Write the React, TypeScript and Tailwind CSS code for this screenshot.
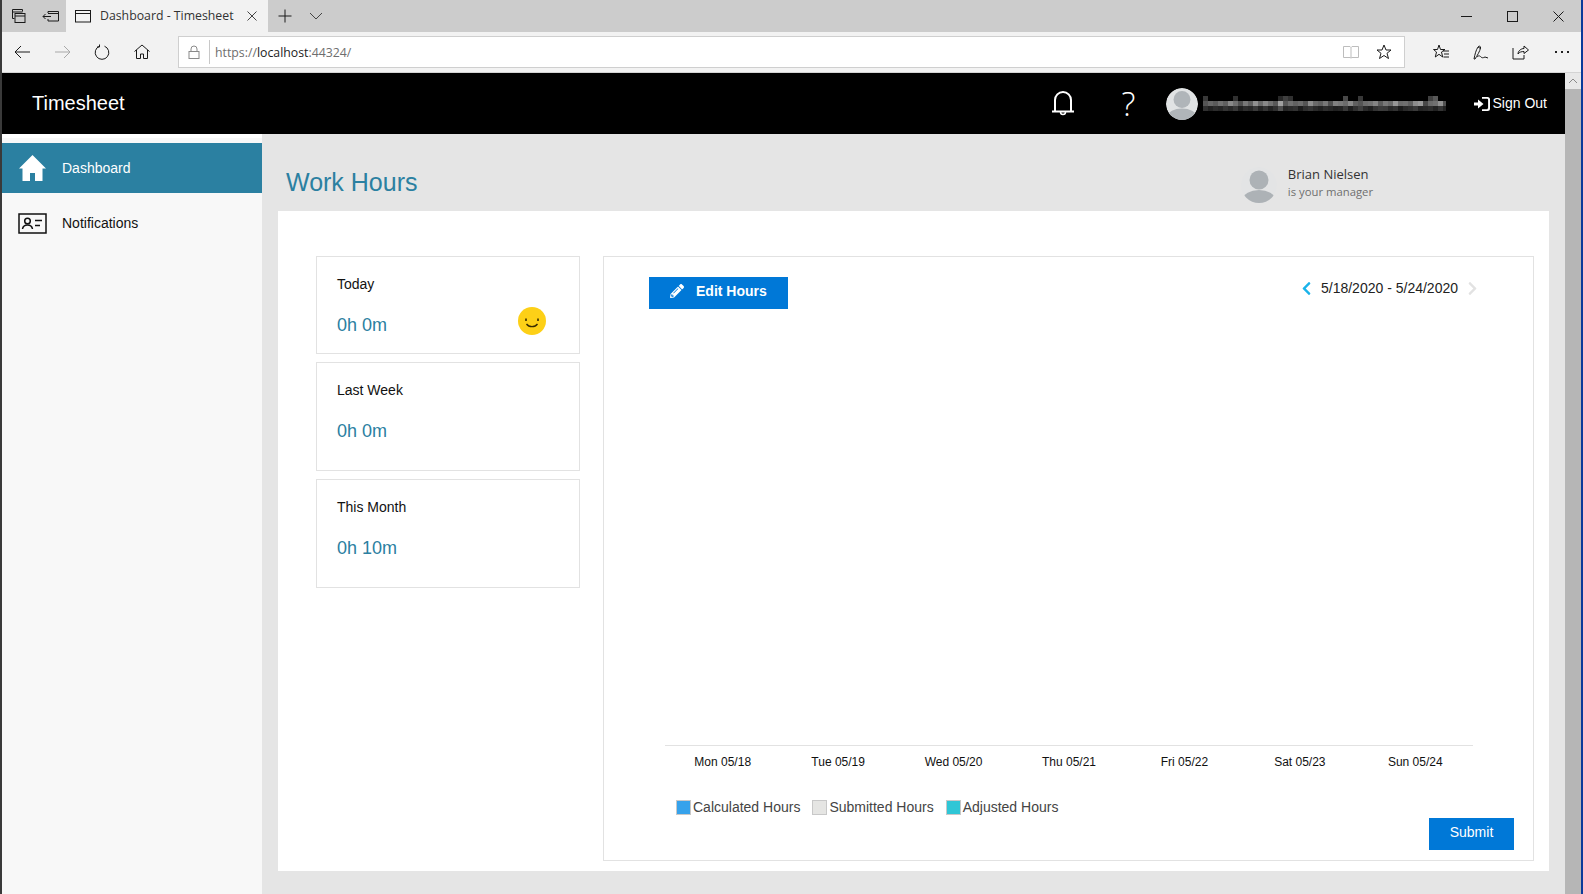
import React from "react";
import { FaPencilAlt, FaChevronLeft, FaChevronRight } from "react-icons/fa";

const mid = [0x55,0x66,0x5a,0x70,0x60,0x88,0x70,0x50,0x78,0x60,0x90,0x6a,0x88,0x70,0x58,0xa0,0x58,0x70,0x62,0x6c,0x55,0x8c,0x6a,0x60,0x78,0x50,0x80,0x78,0x6c,0x88,0x60,0x55,0x6c,0x72,0x84,0x5c,0x78,0x6a,0x96,0x6c,0x70,0x60,0x8c,0x98,0x48,0x6a,0x70,0x90,0x50];
const low = [0x30,0x22,0x2c,0x26,0x34,0x2a,0x38,0x20,0x2e,0x28,0x3a,0x24,0x34,0x22,0x30,0x50,0x26,0x2c,0x32,0x1c,0x2e,0x36,0x2a,0x22,0x2e,0x28,0x20,0x24,0x38,0x1e,0x30,0x40,0x2a,0x20,0x34,0x3c,0x3a,0x2a,0x32,0x1c,0x2a,0x30,0x3a,0x24,0x28,0x2e,0x22,0x34,0x22];
const top: [number, number][] = [[0,0x38],[6,0x30],[15,0x28],[16,0x40],[17,0x30],[28,0x48],[31,0x38],[45,0x40],[46,0x58]];

function Mosaic() {
  const g = (v: number) => `rgb(${v},${v},${v})`;
  return (
    <svg width="243" height="15" className="block">
      {top.map(([i, v]) => <rect key={"t" + i} x={i * 5} y={0} width={5} height={5} fill={g(v)} />)}
      {mid.map((v, i) => <rect key={"m" + i} x={i * 5} y={5} width={5} height={5} fill={g(v)} />)}
      {low.map((v, i) => <rect key={"l" + i} x={i * 5} y={10} width={5} height={5} fill={g(v)} />)}
    </svg>
  );
}

function Person({ size, bg, fg }: { size: number; bg: string; fg: string }) {
  return (
    <svg width={size} height={size} viewBox="0 0 36 36" className="block shrink-0">
      <defs>
        <clipPath id={"c" + size}><circle cx="18" cy="18" r="18" /></clipPath>
      </defs>
      <g clipPath={`url(#c${size})`}>
        <circle cx="18" cy="18" r="18" fill={bg} />
        <circle cx="18" cy="13" r="9.5" fill={fg} />
        <ellipse cx="18" cy="32" rx="16" ry="9" fill={fg} />
      </g>
    </svg>
  );
}

type IconProps = { children: React.ReactNode; w?: number; h?: number; c?: string };
function I({ children, w = 18, h = 18, c = "#1a1a1a" }: IconProps) {
  return (
    <svg width={w} height={h} viewBox={`0 0 ${w} ${h}`} fill="none" stroke={c} strokeWidth="1" className="block shrink-0">
      {children}
    </svg>
  );
}

const stats = [
  { label: "Today", value: "0h 0m", h: "h-[98px]", smile: true },
  { label: "Last Week", value: "0h 0m", h: "h-[109px]", smile: false },
  { label: "This Month", value: "0h 10m", h: "h-[109px]", smile: false },
];
const days = ["Mon 05/18", "Tue 05/19", "Wed 05/20", "Thu 05/21", "Fri 05/22", "Sat 05/23", "Sun 05/24"];
const legend = [
  { label: "Calculated Hours", c: "bg-[#36a2eb]" },
  { label: "Submitted Hours", c: "bg-[#e5e5e3]" },
  { label: "Adjusted Hours", c: "bg-[#2fc6d6]" },
];

export default function App() {
  return (
    <div className="w-[1583px] h-[894px] flex overflow-hidden bg-[#e5e5e5] font-['Liberation_Sans',Arial,sans-serif] text-[14px]">
      <div className="w-[2px] shrink-0 bg-[#3a3a3a]" />
      <div className="flex-1 min-w-0 flex flex-col">
        {/* tab strip */}
        <div className="h-[32px] shrink-0 bg-[#cccccc] flex items-center font-['Open_Sans',sans-serif]">
          <div className="w-[64px] flex items-center pl-[8px] gap-[16px]">
            <I w={16} h={16}>
              <path d="M2.5 1.5h10v2M2.5 1.5v9h2M2.5 4h10" />
              <rect x="5" y="5.5" width="10" height="9" fill="#cccccc" />
              <path d="M5 8h10" />
            </I>
            <I w={18} h={16}>
              <path d="M1 8.5h8M3.5 6l-2.5 2.5 2.5 2.5M6 5V3.500h10.500v9.500H6v-2" />
              <path d="M6 5.500h10.500" />
            </I>
          </div>
          <div className="w-[202px] h-full bg-[#f2f2f2] flex items-center pl-[9px] text-[#333] text-[12.300px]">
            <I w={16} h={14}>
              <rect x="0.5" y="1.500" width="15" height="11.500" />
              <path d="M0.500 4.500h15" />
            </I>
            <span className="ml-[9px] w-[146px] whitespace-nowrap">Dashboard - Timesheet</span>
            <I w={12} h={12} c="#444"><path d="M1.500 1.500l9 9M10.500 1.500l-9 9" /></I>
          </div>
          <div className="ml-[10px]">
            <I w={14} h={14}><path d="M7 0.500v13M0.500 7h13" /></I>
          </div>
          <div className="ml-[17px]">
            <I w={14} h={10} c="#444"><path d="M1 2l6 6 6-6" /></I>
          </div>
          <div className="ml-auto flex items-center">
            <div className="w-[46px] flex justify-center"><I w={11} h={3}><path d="M0 1.500h11" /></I></div>
            <div className="w-[46px] flex justify-center"><I w={11} h={11}><rect x="0.500" y="0.500" width="10" height="10" /></I></div>
            <div className="w-[46px] flex justify-center"><I w={11} h={11}><path d="M0.500 0.500l10 10M10.500 0.500l-10 10" /></I></div>
          </div>
        </div>
        {/* toolbar */}
        <div className="h-[41px] shrink-0 bg-[#f2f2f2] border-b border-[#d4d4d4] flex items-center font-['Open_Sans',sans-serif]">
          <div className="w-[176px] flex items-center pl-[12px]">
            <div className="w-[40px]"><I w={17} h={14}><path d="M16 7H1M7 1L1 7l6 6" /></I></div>
            <div className="w-[40px]"><I w={17} h={14} c="#a8a8a8"><path d="M1 7h15M10 1l6 6-6 6" /></I></div>
            <div className="w-[40px]"><I w={16} h={16}><path d="M5.500 2.200A6.800 6.800 0 1 0 10.500 2.200M5.500 0.500v2.500H3" /></I></div>
            <div><I w={16} h={16}><path d="M0.500 7.500L8 1l7.500 6.500M2.500 6v8.500h4v-4.500h3v4.500h4V6" /></I></div>
          </div>
          <div className="w-[1227px] h-[32px] bg-white border border-[#cfcfcf] flex items-center text-[12.300px]">
            <div className="w-[30px] flex justify-center">
              <I w={12} h={14} c="#8a8a8a"><rect x="1" y="6.500" width="10" height="7" /><path d="M3 6.500V4a3 3 0 0 1 6 0v2.500" /></I>
            </div>
            <div className="w-px h-[24px] bg-[#c8c8c8]" />
            <div className="ml-[5px] pt-[3px] text-[#6e6e6e] whitespace-nowrap">https://<span className="text-[#222]">localhost</span>:44324/</div>
            <div className="ml-auto mr-[12px] flex items-center gap-[17px]">
              <I w={16} h={14} c="#bdbdbd"><path d="M0.500 1.500h6.500l1 1 1-1h6.500v11h-6.500l-1 0.500-1-0.500H0.500zM8 2.500v10" /></I>
              <I w={16} h={16}><path d="M8 1l2 5h5l-4 3.300 1.500 5.200L8 11.500l-4.500 3L5 9.300 1 6h5z" /></I>
            </div>
          </div>
          <div className="flex items-center pl-[28px]">
            <div className="w-[40px]"><I w={17} h={16}><path d="M6 1l1.500 4.500H12L8.500 8l1.200 5L6 10.300 2.300 13l1.200-5L0.500 5.500h4zM10 7h6M11 10h5M10.500 13h5.500" /></I></div>
            <div className="w-[39px]"><I w={17} h={17}><path d="M1 15c1-5 2-9 4-12 1-1.500 3-1 2.500 1C7 7 4 12 2 15zM5 3l2.500 1.500M4 13c2-2 3-1 4 0s2 1 4 0l3 1" /></I></div>
            <div className="w-[43px]"><I w={17} h={16}><path d="M1 4v11h11V11M6 10c0-3 3-5.500 6-5.500V2l4.500 4L12 9.500V7.500C9.500 7.500 7.500 8 6 10z" /></I></div>
            <div className="flex gap-[4px]">
              <div className="w-[2px] h-[2px] bg-[#222]" /><div className="w-[2px] h-[2px] bg-[#222]" /><div className="w-[2px] h-[2px] bg-[#222]" />
            </div>
          </div>
        </div>
        {/* page + scrollbar */}
        <div className="flex-1 min-h-0 flex">
          <div className="flex-1 min-w-0 flex flex-col">
            <header className="h-[61px] shrink-0 bg-black text-white flex items-center pl-[30px] pr-[18px]">
              <div className="text-[20px] pb-[2px]">Timesheet</div>
              <div className="ml-auto flex items-center">
                <svg width="24" height="26" viewBox="0 0 24 26" fill="none" stroke="white" strokeWidth="2" className="block">
                  <path d="M4 20V9a8 8 0 0 1 16 0v11M1 20.500h22" />
                  <path d="M9.500 21a2.500 2.500 0 0 0 5 0" strokeWidth="1.500" />
                </svg>
                <div className="ml-[42px] w-[24px] pb-[1px] text-center text-[33px] leading-none font-['Open_Sans',sans-serif] font-light">?</div>
                <div className="ml-[25px]"><Person size={32} bg="#e1e3e4" fg="#b0b5b9" /></div>
                <div className="ml-[5px]"><Mosaic /></div>
                <div className="ml-[28px] flex items-center">
                  <svg width="16" height="14" viewBox="0 0 16 14" className="block" fill="white">
                    <path d="M0 5.500h4V2.500L9.500 7 4 11.500v-3H0z" />
                    <path d="M8 0h5.500A2.500 2.500 0 0 1 16 2.500v9a2.500 2.500 0 0 1-2.500 2.500H8v-1.800h5.200c.5 0 .9-.4.900-.9V2.700c0-.5-.4-.9-.9-.9H8z" />
                  </svg>
                  <span className="ml-[3px]">Sign Out</span>
                </div>
              </div>
            </header>
            <div className="flex-1 min-h-0 flex">
              <aside className="w-[260px] shrink-0 bg-[#f8f8f8] border-t-[4px] border-white pt-[5px]">
                <div className="h-[50px] bg-[#2b80a1] text-white flex items-center pl-[17px]">
                  <svg width="27" height="26" viewBox="0 0 27 26" className="block" fill="white">
                    <path d="M13.500 0L27 13.500h-3.500V26H16v-8h-5v8H3.500V13.500H0z" />
                  </svg>
                  <span className="ml-[16px]">Dashboard</span>
                </div>
                <div className="h-[60px] text-[#111] flex items-center pl-[16px]">
                  <svg width="29" height="21" viewBox="0 0 29 21" fill="none" stroke="#111" className="block">
                    <rect x="1" y="1" width="27" height="19" strokeWidth="1.500" />
                    <circle cx="9.500" cy="8" r="2.800" strokeWidth="1.500" />
                    <path d="M4.500 16c.5-3 2.500-4 5-4s4.500 1 5 4" strokeWidth="1.500" />
                    <path d="M17 7.500h7M17 12.500h5" strokeWidth="1.500" />
                  </svg>
                  <span className="ml-[15px]">Notifications</span>
                </div>
              </aside>
              <main className="flex-1 min-w-0 pl-[16px] pr-[16px] flex flex-col">
                <div className="h-[77px] shrink-0 flex items-start">
                  <h1 className="ml-[8px] mt-[31px] text-[25px] leading-[34px] text-[#2b80a1]">Work Hours</h1>
                  <div className="ml-auto mr-[176px] mt-[33px] flex items-start">
                    <Person size={36} bg="#e3e4e5" fg="#adb2b6" />
                    <div className="ml-[11px] -mt-[2px] font-['Open_Sans',sans-serif]">
                      <div className="text-[13px] leading-[18px] text-[#333]">Brian Nielsen</div>
                      <div className="text-[11.300px] leading-[17px] text-[#6f6f6f]">is your manager</div>
                    </div>
                  </div>
                </div>
                <section className="h-[660px] shrink-0 bg-white pl-[38px] pr-[15px] pt-[45px] pb-[10px] flex">
                  <div className="w-[264px] shrink-0 flex flex-col gap-[8px]">
                    {stats.map((s) => (
                      <div key={s.label} className={`${s.h} border border-[#e2e2e2] pl-[20px] pr-[33px] pt-[18px] relative`}>
                        <div className="leading-[18px] text-[#111]">{s.label}</div>
                        <div className="mt-[20px] text-[18px] leading-[24px] text-[#2b80a1]">{s.value}</div>
                        {s.smile && (
                          <svg width="28" height="28" viewBox="0 0 28 28" className="absolute right-[33px] top-[50px] block">
                            <circle cx="14" cy="14" r="14" fill="#fdd017" />
                            <path d="M8 11.500v2.500M20 11.500v2.500" stroke="#3a2d00" strokeWidth="1.600" />
                            <path d="M8.500 17c2.500 3.500 8.500 3.500 11 0" stroke="#3a2d00" strokeWidth="1.300" fill="none" />
                          </svg>
                        )}
                      </div>
                    ))}
                  </div>
                  <div className="ml-[23px] flex-1 min-w-0 border border-[#e2e2e2] pt-[20px] pl-[45px] pr-[19px] flex flex-col">
                    <div className="flex items-start">
                      <button className="w-[139px] h-[32px] bg-[#0078d7] text-white font-bold flex items-center pl-[21px] pb-[4px]">
                        <FaPencilAlt className="w-[14px] h-[14px]" />
                        <span className="ml-[12px]">Edit Hours</span>
                      </button>
                      <div className="ml-auto mr-[35px] mt-[1px] flex items-center text-[#222]">
                        <FaChevronLeft className="w-[13px] h-[15px] text-[#1ab3ea]" />
                        <span className="ml-[8px]">5/18/2020 - 5/24/2020</span>
                        <FaChevronRight className="ml-[8px] w-[13px] h-[15px] text-[#e2e2e2]" />
                      </div>
                    </div>
                    <div className="flex-1 ml-[16px] mr-[41px] border-b border-[#e2e2e2]" />
                    <div className="h-[54px] shrink-0 ml-[16px] mr-[41px] grid grid-cols-7 pt-[8px] text-[12px] leading-[16px] text-[#111] text-center">
                      {days.map((d) => <div key={d}>{d}</div>)}
                    </div>
                    <div className="h-[50px] shrink-0 flex items-start">
                      <div className="ml-[27px] flex items-center gap-[12px] text-[#444]">
                        {legend.map((l) => (
                          <div key={l.label} className="flex items-center">
                            <span className={`w-[15px] h-[15px] border border-[#c8c8c8] ${l.c}`} />
                            <span className="ml-[2px] leading-[15px]">{l.label}</span>
                          </div>
                        ))}
                      </div>
                      <button className="ml-auto mt-[18px] w-[85px] h-[32px] bg-[#0078d7] text-white pb-[4px]">Submit</button>
                    </div>
                    <div className="h-[10px] shrink-0" />
                  </div>
                </section>
              </main>
            </div>
          </div>
          <div className="w-[16px] shrink-0 bg-[#b6b6b6] flex flex-col">
            <div className="h-[16px] bg-[#e8e8e8] flex items-center justify-center">
              <I w={10} h={6} c="#8a8a8a"><path d="M1 5l4-4 4 4" /></I>
            </div>
          </div>
        </div>
      </div>
      <div className="w-[2px] shrink-0 bg-[#0a3a9a]" />
    </div>
  );
}
